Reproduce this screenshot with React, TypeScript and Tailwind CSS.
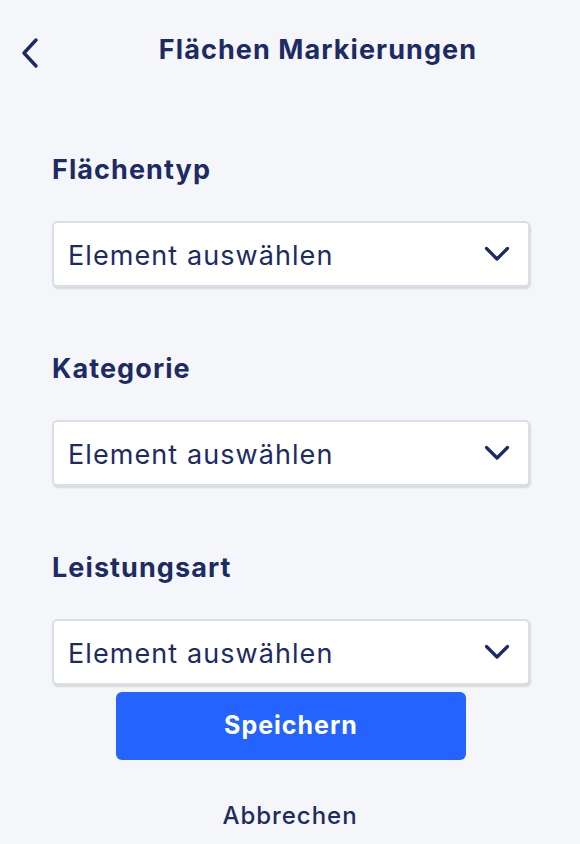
import React from "react";

const font = { fontFamily: "Inter, 'Noto Sans', sans-serif" };

function Chevron() {
  return (
    <svg width="26" height="16" viewBox="0 0 26 16" fill="none">
      <path d="M2.5 2.5l10.5 10.5L23.5 2.5" stroke="#1d2b64" strokeWidth="3.2" strokeLinecap="round" strokeLinejoin="round" />
    </svg>
  );
}

function Field({ label }: { label: string }) {
  return (
    <div className="flex flex-col">
      <div className="text-[27px] font-bold tracking-[0.04em] text-[#1d2b64] leading-[32px] h-[32px]">{label}</div>
      <div className="mt-[35px] h-[66px] bg-white border-2 border-[#dadee6] rounded-[5px] shadow-[1px_2px_2px_rgba(0,0,0,0.12)] flex items-center justify-between pl-[14px] pr-[18px]">
        <span className="text-[27px] tracking-[0.04em] text-[#1d2b64] pt-[5px]">Element auswählen</span>
        <Chevron />
      </div>
    </div>
  );
}

export default function App() {
  return (
    <div style={font} className="w-[580px] h-[844px] bg-[#f5f6f9] flex flex-col overflow-hidden">
      <div className="flex items-center h-[56px] mt-[22px]">
        <div className="w-[56px] flex justify-center pl-[6px] pt-[5px]">
          <svg width="20" height="32" viewBox="0 0 20 32" fill="none">
            <path d="M15 3L3 16l12 13" stroke="#1d2b64" strokeWidth="3.4" strokeLinecap="round" strokeLinejoin="round" />
          </svg>
        </div>
        <div className="flex-1 text-center text-[27px] font-bold tracking-[0.04em] text-[#1d2b64]">Flächen Markierungen</div>
      </div>
      <div className="pl-[52px] pr-[50px] mt-[76px] flex flex-col">
        <Field label="Flächentyp" />
      </div>
      <div className="pl-[52px] pr-[50px] mt-[66px] flex flex-col">
        <Field label="Kategorie" />
      </div>
      <div className="pl-[52px] pr-[50px] mt-[66px] flex flex-col">
        <Field label="Leistungsart" />
      </div>
      <div className="flex justify-center mt-[7px] pl-[2px]">
        <button className="w-[350px] h-[68px] bg-[#2463fe] rounded-[6px] text-white text-[25px] font-bold tracking-[0.04em]">Speichern</button>
      </div>
      <div className="text-center mt-[38px] text-[24px] font-medium tracking-[0.04em] text-[#1d2b64]">Abbrechen</div>
    </div>
  );
}
